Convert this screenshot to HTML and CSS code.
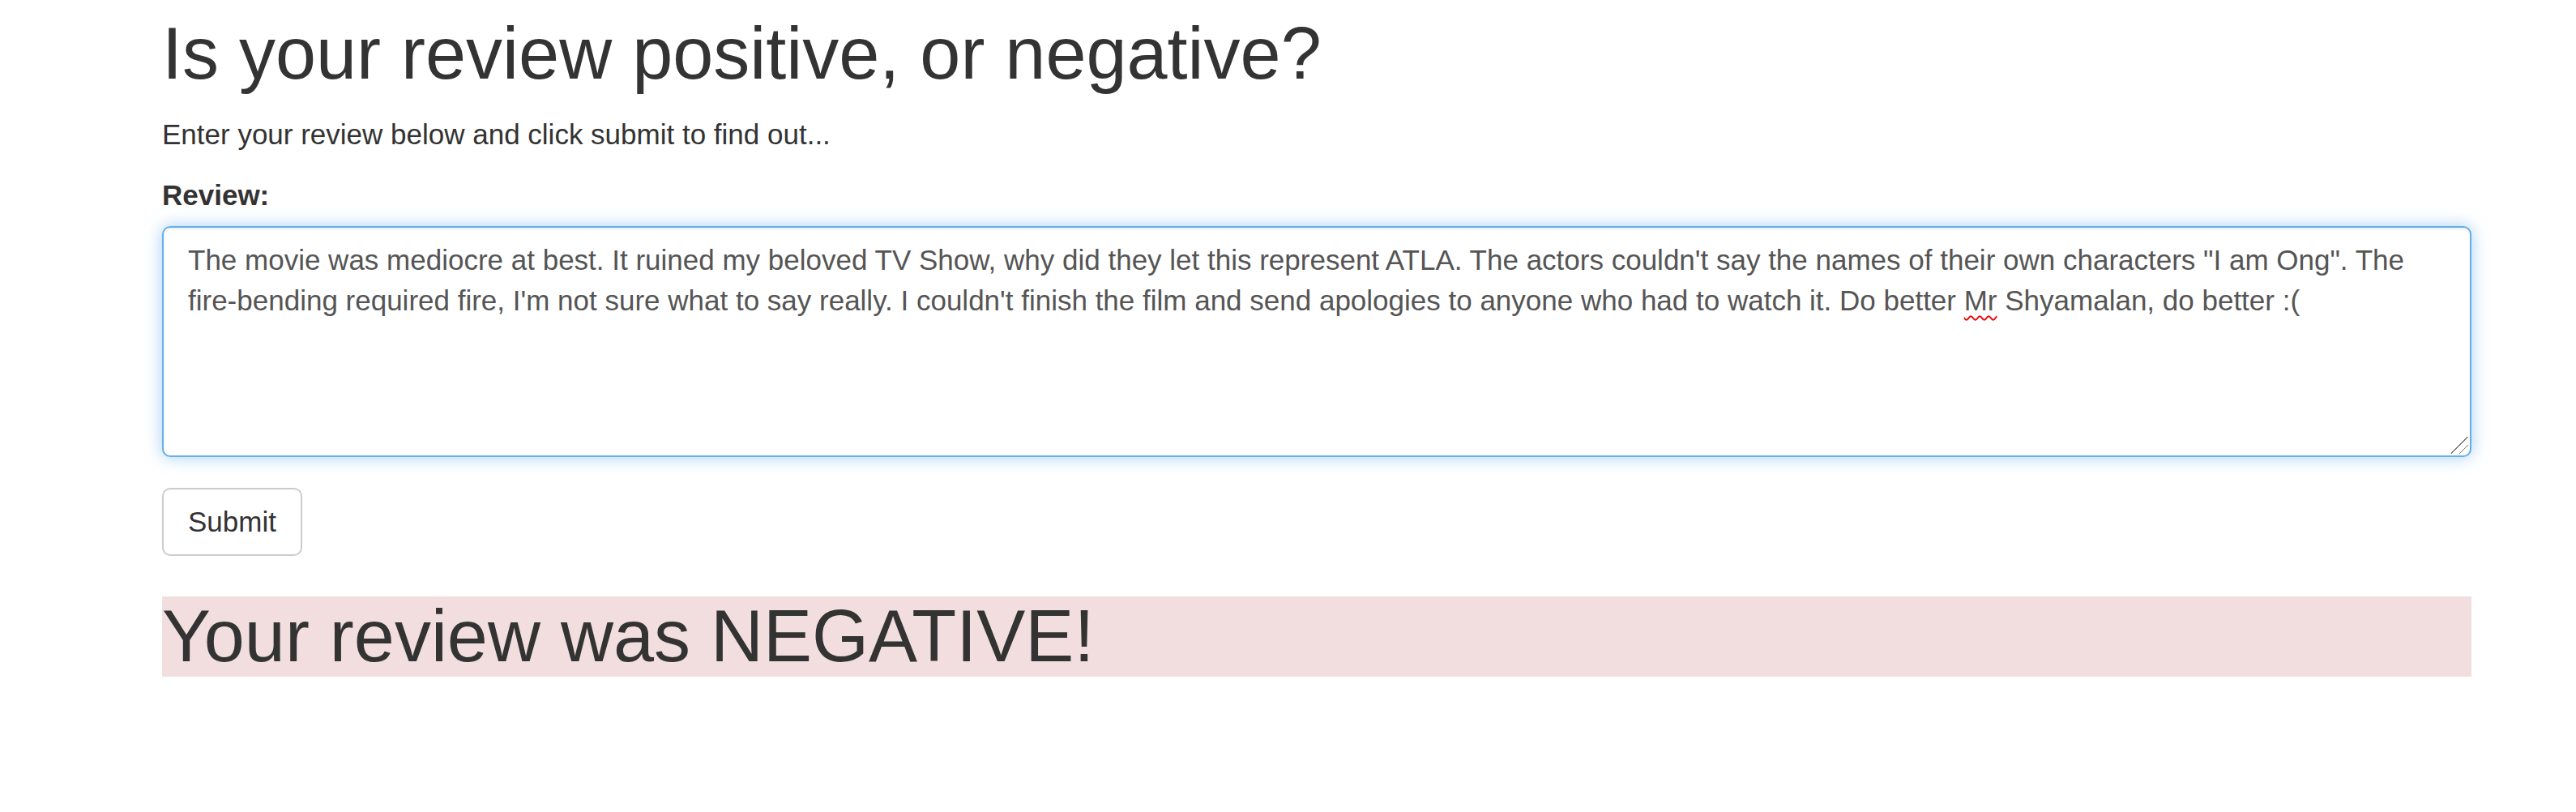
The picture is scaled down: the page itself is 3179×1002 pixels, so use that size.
FILE: index.html
```html
<!DOCTYPE html>
<html lang="en">
<head>
<meta charset="utf-8">
<title>Review sentiment</title>
<link rel="stylesheet" href="styles.css">
</head>
<body>
<div class="container">
  <h1 class="title">Is your review positive, or negative?</h1>
  <p class="lead-text">Enter your review below and click submit to find out...</p>
  <form class="review-form">
    <div class="form-group">
      <label class="field-label" for="review">Review:</label>
      <div class="form-control" id="review" role="textbox" aria-multiline="true">The movie was mediocre at best. It ruined my beloved TV Show, why did they let this represent ATLA. The actors couldn't say the names of their own characters "I am Ong". The fire-bending required fire, I'm not sure what to say really. I couldn't finish the film and send apologies to anyone who had to watch it. Do better <span class="misspelled">Mr</span> Shyamalan, do better :(</div>
    </div>
    <button type="button" class="btn">Submit</button>
  </form>
  <h1 class="result">Your review was NEGATIVE!</h1>
</div>
</body>
</html>
```
FILE: styles.css
```css
html, body {
  margin: 0;
  padding: 0;
  background: #fff;
}

body {
  font-family: "Liberation Sans", Arial, Helvetica, sans-serif;
  font-size: 35px;
  line-height: 50px;
  color: #333;
}

.container {
  width: 2850px;
  margin-left: 200px;
  padding-top: 17px;
}

.title {
  font-size: 90px;
  line-height: 99px;
  font-weight: 500;
  margin: 0 0 25px;
}

.lead-text {
  margin: 0 0 25px;
}

.form-group {
  margin-bottom: 38px;
}

.field-label {
  display: inline-block;
  font-weight: bold;
  margin-bottom: 13px;
}

.form-control {
  position: relative;
  display: block;
  box-sizing: border-box;
  width: 100%;
  height: 285px;
  padding: 15px 30px;
  border: 2px solid #66afe9;
  border-radius: 10px;
  background: #fff;
  color: #555;
  font-size: 35px;
  line-height: 50px;
  box-shadow: inset 0 2px 3px rgba(0, 0, 0, .075), 0 0 20px rgba(102, 175, 233, .6);
  overflow: hidden;
  white-space: pre-wrap;
}

.form-control::after {
  content: "";
  position: absolute;
  right: 2px;
  bottom: 2px;
  width: 21px;
  height: 21px;
  background: linear-gradient(135deg,
    transparent 47%, #777 47%, #777 51%, transparent 51%,
    transparent 72%, #777 72%, #777 76%, transparent 76%);
}

.misspelled {
  text-decoration: underline wavy #e00;
  text-decoration-thickness: 2px;
  text-underline-offset: 6px;
}

.btn {
  display: inline-block;
  box-sizing: border-box;
  margin: 0;
  padding: 15px 30px;
  font-family: inherit;
  font-size: 35px;
  line-height: 50px;
  color: #333;
  background: #fff;
  border: 2px solid #ccc;
  border-radius: 10px;
  cursor: pointer;
}

.result {
  margin: 50px 0 0;
  font-size: 90px;
  line-height: 99px;
  font-weight: 500;
  background: #f2dede;
}
```
